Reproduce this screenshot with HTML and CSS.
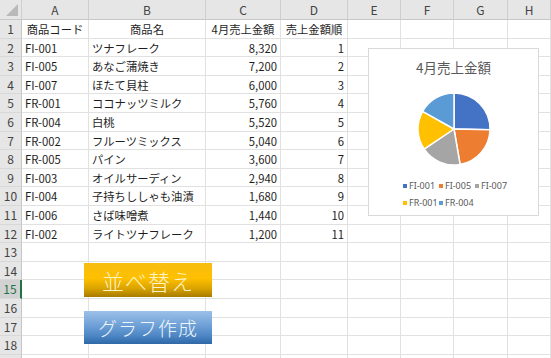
FILE: index.html
```html
<!DOCTYPE html>
<html lang="ja">
<head>
    <meta charset="UTF-8">
    <title>売上表</title>
    <link rel="stylesheet" href="styles.css">
</head>
<body>
    <div class="sheet">
        <div class="row head">
            <div class="corner"><span class="tri"></span></div>
            <div>A</div><div>B</div><div>C</div><div>D</div><div>E</div><div>F</div><div>G</div><div>H</div>
        </div>
        <div class="row">
            <div class="num">1</div>
            <div class="c">商品コード</div><div class="c">商品名</div><div class="c">4月売上金額</div><div class="c">売上金額順</div><div></div><div></div><div></div><div></div>
        </div>
        <div class="row">
            <div class="num">2</div>
            <div>FI-001</div><div>ツナフレーク</div><div class="r">8,320</div><div class="r">1</div><div></div><div></div><div></div><div></div>
        </div>
        <div class="row">
            <div class="num">3</div>
            <div>FI-005</div><div>あなご蒲焼き</div><div class="r">7,200</div><div class="r">2</div><div></div><div></div><div></div><div></div>
        </div>
        <div class="row">
            <div class="num">4</div>
            <div>FI-007</div><div>ほたて貝柱</div><div class="r">6,000</div><div class="r">3</div><div></div><div></div><div></div><div></div>
        </div>
        <div class="row">
            <div class="num">5</div>
            <div>FR-001</div><div>ココナッツミルク</div><div class="r">5,760</div><div class="r">4</div><div></div><div></div><div></div><div></div>
        </div>
        <div class="row">
            <div class="num">6</div>
            <div>FR-004</div><div>白桃</div><div class="r">5,520</div><div class="r">5</div><div></div><div></div><div></div><div></div>
        </div>
        <div class="row">
            <div class="num">7</div>
            <div>FR-002</div><div>フルーツミックス</div><div class="r">5,040</div><div class="r">6</div><div></div><div></div><div></div><div></div>
        </div>
        <div class="row">
            <div class="num">8</div>
            <div>FR-005</div><div>パイン</div><div class="r">3,600</div><div class="r">7</div><div></div><div></div><div></div><div></div>
        </div>
        <div class="row">
            <div class="num">9</div>
            <div>FI-003</div><div>オイルサーディン</div><div class="r">2,940</div><div class="r">8</div><div></div><div></div><div></div><div></div>
        </div>
        <div class="row">
            <div class="num">10</div>
            <div>FI-004</div><div>子持ちししゃも油漬</div><div class="r">1,680</div><div class="r">9</div><div></div><div></div><div></div><div></div>
        </div>
        <div class="row">
            <div class="num">11</div>
            <div>FI-006</div><div>さば味噌煮</div><div class="r">1,440</div><div class="r">10</div><div></div><div></div><div></div><div></div>
        </div>
        <div class="row">
            <div class="num">12</div>
            <div>FI-002</div><div>ライトツナフレーク</div><div class="r">1,200</div><div class="r">11</div><div></div><div></div><div></div><div></div>
        </div>
        <div class="row">
            <div class="num">13</div>
            <div></div><div></div><div></div><div></div><div></div><div></div><div></div><div></div>
        </div>
        <div class="row">
            <div class="num">14</div>
            <div></div><div></div><div></div><div></div><div></div><div></div><div></div><div></div>
        </div>
        <div class="row">
            <div class="num active">15</div>
            <div></div><div></div><div></div><div></div><div></div><div></div><div></div><div></div>
        </div>
        <div class="row">
            <div class="num">16</div>
            <div></div><div></div><div></div><div></div><div></div><div></div><div></div><div></div>
        </div>
        <div class="row">
            <div class="num">17</div>
            <div></div><div></div><div></div><div></div><div></div><div></div><div></div><div></div>
        </div>
        <div class="row">
            <div class="num">18</div>
            <div></div><div></div><div></div><div></div><div></div><div></div><div></div><div></div>
        </div>
        <div class="row">
            <div class="num"></div>
            <div></div><div></div><div></div><div></div><div></div><div></div><div></div><div></div>
        </div>

        <div class="chart">
            <div class="chart-title">4月売上金額</div>
            <svg class="pie" width="76" height="76" viewBox="-38 -38 76 76">
                <g stroke="#fff" stroke-width="1.5" stroke-linejoin="round">
                    <path fill="#4472c4" d="M0 0 L0 -36 A36 36 0 0 1 35.99 0.82 Z"/>
                    <path fill="#ed7d31" d="M0 0 L35.99 0.82 A36 36 0 0 1 6.07 35.49 Z"/>
                    <path fill="#a5a5a5" d="M0 0 L6.07 35.49 A36 36 0 0 1 -29.92 20.03 Z"/>
                    <path fill="#ffc000" d="M0 0 L-29.92 20.03 A36 36 0 0 1 -31.36 -17.67 Z"/>
                    <path fill="#5b9bd5" d="M0 0 L-31.36 -17.67 A36 36 0 0 1 0 -36 Z"/>
                </g>
            </svg>
            <ul class="legend">
                <li><span class="key k1"></span>FI-001</li>
                <li><span class="key k2"></span>FI-005</li>
                <li><span class="key k3"></span>FI-007</li>
                <li><span class="key k4"></span>FR-001</li>
                <li><span class="key k5"></span>FR-004</li>
            </ul>
        </div>

        <div class="btn btn-sort">並べ替え</div>
        <div class="btn btn-graph">グラフ作成</div>
    </div>
</body>
</html>
```

FILE: styles.css
```css
*{
    margin: 0;
    padding: 0;
    box-sizing: border-box;
}
body{
    background: #fff;
    overflow: hidden;
    font-family: "Noto Sans CJK JP", "Noto Sans", sans-serif;
    color: #1e1e1e;
}
.sheet{
    position: relative;
    width: 551px;
    height: 358px;
    overflow: hidden;
}
.row{
    display: grid;
    grid-template-columns: 22px 67px 117px 75px 67px 53px 53px 54px 1fr;
    height: 18.6px;
    font-size: 11.3px;
    line-height: 18px;
}
.row > div{
    border-right: 1px solid #e1e1e1;
    border-bottom: 1px solid #e1e1e1;
    padding: 0 3px;
    white-space: nowrap;
    overflow: hidden;
}
.row .c{
    text-align: center;
    padding: 0;
}
.row .r{
    text-align: right;
}
.row.head{
    height: 20px;
    line-height: 20px;
    font-size: 12px;
    color: #444;
}
.row.head > div{
    background: #e6e6e6;
    text-align: center;
    border-right-color: #cfcfcf;
    border-bottom-color: #c6c6c6;
}
.row.head .corner{
    position: relative;
}
.tri{
    position: absolute;
    right: 3px;
    bottom: 3px;
    width: 0;
    height: 0;
    border-left: 12px solid transparent;
    border-bottom: 12px solid #b9b9b9;
}
.row .num{
    background: #e6e6e6;
    text-align: center;
    padding: 0;
    color: #444;
    font-size: 12px;
    border-right-color: #c6c6c6;
    border-bottom-color: #d8d8d8;
}
.row .num.active{
    background: #d2d2d2;
    border-right: 2px solid #217346;
    color: #217346;
}

/* chart sits over the cells */
.chart{
    position: absolute;
    left: 368px;
    top: 48px;
    width: 171px;
    height: 168px;
    background: #fff;
    border: 1px solid #d9d9d9;
    display: flex;
    flex-direction: column;
    align-items: center;
}
.chart-title{
    margin-top: 9px;
    font-size: 13.5px;
    line-height: 18px;
    color: #595959;
}
.pie{
    margin-top: 15px;
    flex-shrink: 0;
}
.legend{
    list-style: none;
    align-self: flex-start;
    margin-top: 12px;
    margin-left: 34px;
    display: grid;
    grid-template-columns: 36px 36px auto;
    row-gap: 4px;
    font-family: "Noto Sans", sans-serif;
    font-size: 9px;
    line-height: 13px;
    color: #595959;
}
.legend li{
    display: flex;
    align-items: center;
    white-space: nowrap;
}
.key{
    width: 4px;
    height: 4px;
    margin-right: 2px;
}
.k1{ background: #4472c4; }
.k2{ background: #ed7d31; }
.k3{ background: #a5a5a5; }
.k4{ background: #ffc000; }
.k5{ background: #5b9bd5; }

/* macro buttons */
.btn{
    position: absolute;
    left: 84px;
    width: 128px;
    height: 34px;
    display: flex;
    align-items: center;
    justify-content: center;
    font-weight: 300;
    letter-spacing: 1px;
}
.btn-sort{
    top: 263px;
    font-size: 22px;
    color: #fff4c8;
    background: linear-gradient(#f7bd12, #ffc000 45%, #d9a300 75%, #a67b00);
}
.btn-graph{
    top: 311px;
    height: 33px;
    font-size: 19px;
    color: #eef5fc;
    background: linear-gradient(#9cc1e8, #6d9fd6 45%, #4d86c4 75%, #2f68a6);
}
```
